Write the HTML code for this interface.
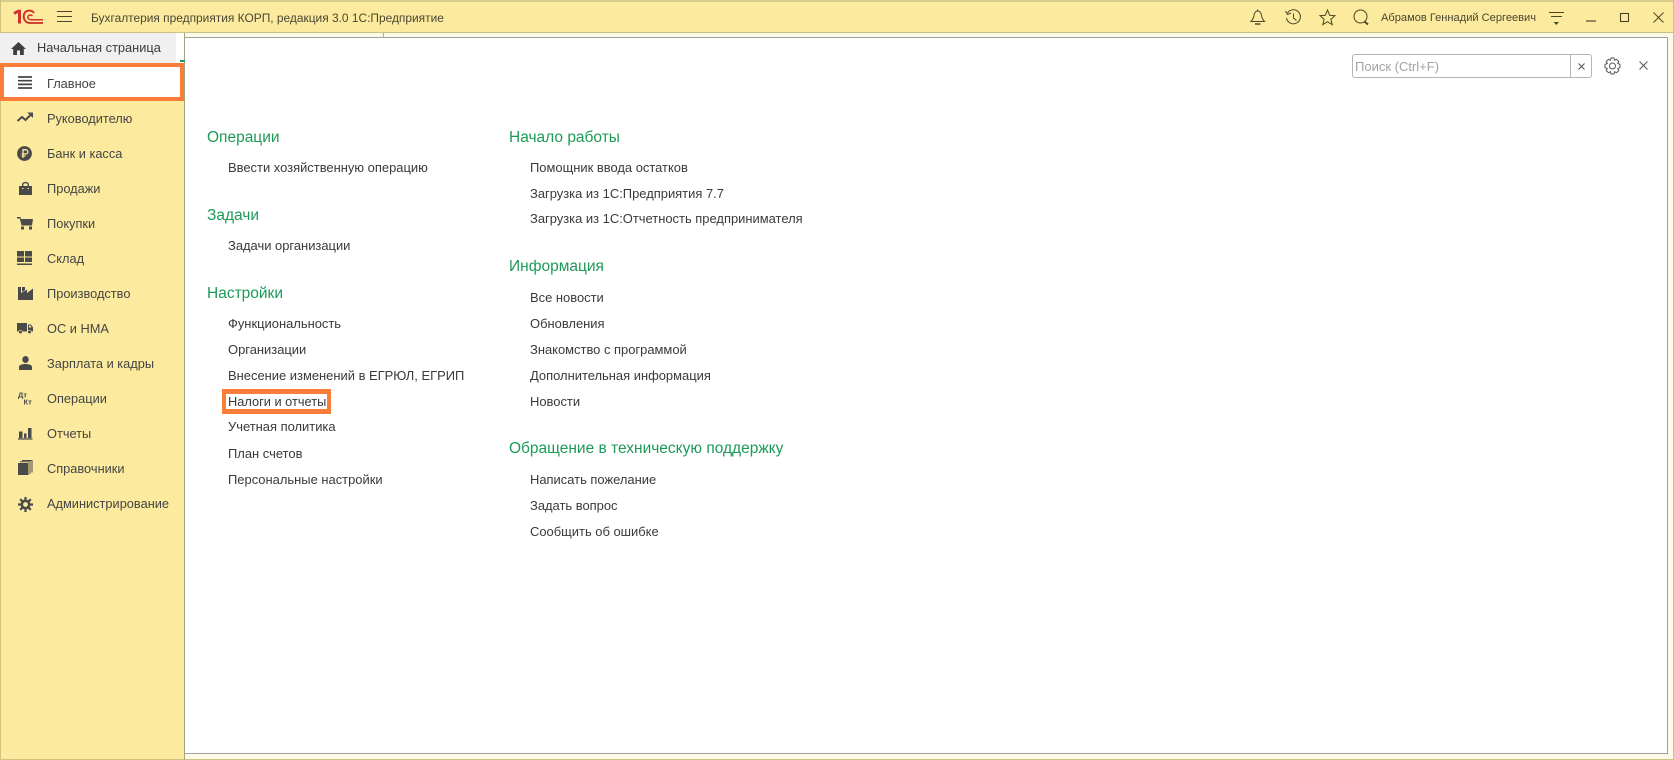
<!DOCTYPE html>
<html lang="ru"><head><meta charset="utf-8"><title>1С</title>
<style>
html,body{margin:0;padding:0;width:1674px;height:760px;overflow:hidden;background:#fdfbe8;font-family:"Liberation Sans",sans-serif;color:#333}
.a{position:absolute;white-space:nowrap}
.t{position:absolute;white-space:nowrap;font-size:12.95px;line-height:20px;height:20px;color:#3a3a3a}
.h{position:absolute;white-space:nowrap;font-size:15.5px;line-height:22px;height:22px;color:#1d9a57}
.s{position:absolute;left:47px;white-space:nowrap;font-size:12.8px;line-height:20px;color:#444}
svg{position:absolute;overflow:visible}
</style></head><body>
<div class="a" style="left:0;top:0;width:1674px;height:2px;background:#d8cd8c"></div>
<div class="a" style="left:0;top:2px;width:1674px;height:30px;background:#fceb9f;border-bottom:1px solid #c9c08a"></div>
<div class="a" style="left:0;top:33px;width:185px;height:727px;background:#fceb9f"></div>
<div class="a" style="left:0;top:0;width:1px;height:760px;background:#cfc47f"></div>
<div class="a" style="left:1673px;top:0;width:1px;height:760px;background:#cfc47f"></div>
<div class="a" style="left:0;top:759px;width:1674px;height:1px;background:#cfc47f"></div>
<div class="a" style="left:184px;top:33px;width:1px;height:727px;background:#a9a37c"></div>

<!-- logo -->
<svg style="left:13px;top:9px" width="31" height="16" viewBox="0 0 31 16" fill="none" stroke="#d2322d">
<path d="M1 4.500L5 2.200H6.500V14.500" stroke-width="3"/>
<path d="M21 4C19 .8 13 .8 11.300 4.500C9.500 9 12 14 17 14" stroke-width="2"/>
<path d="M19.500 7C17.800 5.500 15.500 5.800 15 7.500C14.500 9.500 16 10.700 18 10.700H30" stroke-width="1.500"/>
<path d="M17 14H30" stroke-width="1.800"/>
</svg>
<svg style="left:57px;top:11px" width="15" height="12" fill="none" stroke="#4b4629" stroke-width="1"><path d="M0 .5H15M0 5.500H15M0 10.500H15"/></svg>
<div class="a" style="left:91px;top:8px;font-size:11.93px;line-height:20px;color:#4a4632">Бухгалтерия предприятия КОРП, редакция 3.0 1С:Предприятие</div>

<!-- top right icons -->
<svg style="left:1250px;top:9px" width="16" height="17" fill="none" stroke="#4b4629" stroke-width="1"><path d="M1 12.500H14.500C12.500 10.500 12 9 11.500 6.500C11 3.500 10 2 7.700 2C5.500 2 4.500 3.500 4 6.500C3.500 9 3 10.500 1 12.500Z"/><path d="M5 15H10.500" stroke-width="1.400"/><path d="M7.700 .5V2"/></svg>
<svg style="left:1285px;top:9px" width="17" height="17" fill="none" stroke="#4b4629" stroke-width="1"><path d="M2.500 4A7 7 0 1 1 1.500 9"/><path d="M.5 2L2.500 5.500L6 4"/><path d="M8.500 4.500V9L11.500 11.500"/></svg>
<svg style="left:1319px;top:9px" width="17" height="17" fill="none" stroke="#4b4629" stroke-width="1"><path d="M8.500 1L10.700 6.300L16 6.700L11.900 10.200L13.200 15.700L8.500 12.700L3.800 15.700L5.100 10.200L1 6.700L6.300 6.300Z"/></svg>
<svg style="left:1353px;top:9px" width="17" height="17" fill="none" stroke="#4b4629" stroke-width="1"><circle cx="7.500" cy="7.500" r="6.500"/><path d="M11.500 12.500L15 15.500" stroke-width="2"/></svg>
<div class="a" style="left:1381px;top:8px;font-size:11.1px;line-height:20px;color:#4a4632">Абрамов Геннадий Сергеевич</div>
<svg style="left:1549px;top:11px" width="15" height="14" stroke="#4b4629" stroke-width="1" fill="none"><path d="M0 1.500H15M2 5.500H13"/><path d="M4.500 11H10L7.300 14Z" fill="#4b4629" stroke="none"/></svg>
<svg style="left:1586px;top:20px" width="10" height="2"><path d="M0 1H10" stroke="#4b4629" stroke-width="1.200"/></svg>
<svg style="left:1620px;top:13px" width="9" height="9" fill="none"><rect x=".5" y=".5" width="8" height="8" stroke="#4b4629" stroke-width="1.100"/></svg>
<svg style="left:1653px;top:12px" width="11" height="11" fill="none"><path d="M.5 .5L10.500 10.500M10.500 .5L.5 10.500" stroke="#4b4629" stroke-width="1"/></svg>

<!-- tabs area -->
<div class="a" style="left:0;top:33px;width:176px;height:30px;background:#f0f0f0"></div>
<div class="a" style="left:176px;top:33px;width:8px;height:30px;background:#fff"></div>
<div class="a" style="left:383px;top:33px;width:1px;height:5px;background:#aaa"></div>
<div class="a" style="left:180px;top:60px;width:5px;height:2px;background:#1d9a57"></div>
<svg style="left:11px;top:42px" width="15" height="13"><path d="M7.500 0L15 7H12.800V13H9V8.500H6V13H2.200V7H0Z" fill="#3f3f3f"/></svg>
<div class="a" style="left:37px;top:38px;font-size:12.8px;line-height:20px;color:#3a3a3a">Начальная страница</div>

<!-- content panel -->
<div class="a" style="left:185px;top:37px;width:1483px;height:717px;background:#fff;border-top:1px solid #a0a0a0;border-right:1px solid #a0a0a0;border-bottom:1px solid #a0a0a0;box-sizing:border-box"></div>

<!-- highlighted main -->
<div class="a" style="left:0;top:63px;width:184px;height:38px;background:#fff;border:4px solid #fb7d3a;box-sizing:border-box"></div>
<svg style="left:18px;top:76px" width="14" height="13"><path d="M0 1H14M0 4.700H14M0 8.400H14M0 12H14" stroke="#444" stroke-width="1.700"/></svg>
<div class="s" style="top:74px">Главное</div>

<!-- sidebar items -->
<svg style="left:17px;top:112px" width="16" height="11" fill="none" stroke="#4a4a4a" stroke-width="2"><path d="M.5 9L5 5L8.500 8L14 2.500"/><path d="M10 .5H16V6L13 3Z" fill="#4a4a4a" stroke="none"/></svg>
<div class="s" style="top:109px">Руководителю</div>
<svg style="left:17px;top:146px" width="15" height="15"><circle cx="7.500" cy="7.500" r="7.400" fill="#4a4a4a"/><path d="M6 12V3.700H8.700A2 2 0 0 1 8.700 8H4.700M4.700 10H8.500" fill="none" stroke="#fceb9f" stroke-width="1.300"/></svg>
<div class="s" style="top:144px">Банк и касса</div>
<svg style="left:19px;top:182px" width="13" height="13"><path d="M0 4H13V13H0Z" fill="#4a4a4a"/><path d="M3.700 7V2.800C3.700 -.2 9.300 -.2 9.300 2.800V7" fill="none" stroke="#4a4a4a" stroke-width="1.400"/><path d="M3 6.500H4.400M8.600 6.500H10" stroke="#fceb9f" stroke-width="1"/></svg>
<div class="s" style="top:179px">Продажи</div>
<svg style="left:17px;top:217px" width="16" height="13"><path d="M0 0H3.500L4 2H16L15 8.500H4.500L2.800 1.500H0Z" fill="#4a4a4a"/><rect x="4" y="9.500" width="3" height="3" fill="#4a4a4a"/><rect x="12" y="9.500" width="3" height="3" fill="#4a4a4a"/></svg>
<div class="s" style="top:214px">Покупки</div>
<svg style="left:17px;top:251px" width="15" height="14" fill="#4a4a4a"><rect width="7" height="5.500"/><rect x="8" width="7" height="5.500"/><rect y="6.500" width="7" height="4.500"/><rect x="8" y="6.500" width="7" height="4.500"/><rect y="12.500" width="15" height="1.500"/></svg>
<div class="s" style="top:249px">Склад</div>
<svg style="left:18px;top:287px" width="15" height="13" fill="#4a4a4a"><path d="M0 13V0H3V6L9 2.500V6L15 1.500V13Z"/><path d="M4 0H7V3L4 5Z"/></svg>
<div class="s" style="top:284px">Производство</div>
<svg style="left:17px;top:323px" width="16" height="11" fill="#4a4a4a"><rect width="10" height="8.500"/><path d="M11 1.500H14L16 4.500V8.500H11ZM12 2.500V4.500H14.500L13.500 2.500Z" fill-rule="evenodd"/><circle cx="3.500" cy="9" r="1.800" stroke="#fceb9f" stroke-width=".6"/><circle cx="12.500" cy="9" r="1.800" stroke="#fceb9f" stroke-width=".6"/></svg>
<div class="s" style="top:319px">ОС и НМА</div>
<svg style="left:19px;top:356px" width="13" height="14" fill="#4a4a4a"><ellipse cx="6.500" cy="3.500" rx="3.200" ry="3.500"/><path d="M0 14V11C0 9 3 8 6.500 8S13 9 13 11V14Z"/></svg>
<div class="s" style="top:354px">Зарплата и кадры</div>
<svg style="left:18px;top:391px" width="15" height="15"><text x="0" y="6.500" font-family="Liberation Sans" font-size="7.500" font-weight="bold" fill="#4a4a4a">Дт</text><text x="5.500" y="13.500" font-family="Liberation Sans" font-size="7.500" font-weight="bold" fill="#4a4a4a">Кт</text></svg>
<div class="s" style="top:389px">Операции</div>
<svg style="left:18px;top:428px" width="15" height="12" fill="#4a4a4a"><rect x="1" y="3.500" width="3.500" height="6.500"/><rect x="6" y="5.500" width="2.500" height="4.500"/><rect x="10" y="0" width="3.500" height="10"/><rect y="10.300" width="14.500" height="1.300"/></svg>
<div class="s" style="top:424px">Отчеты</div>
<svg style="left:18px;top:460px" width="15" height="15"><rect y="3" width="10.500" height="12" fill="#4a4a4a"/><path d="M2 1.800H12V14M4 .5H14V12.500" fill="none" stroke="#4a4a4a" stroke-width="1"/></svg>
<div class="s" style="top:459px">Справочники</div>
<svg style="left:18px;top:497px" width="15" height="15" fill="none" stroke="#4a4a4a"><circle cx="7.500" cy="7.500" r="3.700" stroke-width="2.600"/><path d="M7.500 0V3M7.500 12V15M0 7.500H3M12 7.500H15M2.200 2.200L4.300 4.300M10.700 10.700L12.800 12.800M12.800 2.200L10.700 4.300M4.300 10.700L2.200 12.800" stroke-width="2.200"/></svg>
<div class="s" style="top:494px">Администрирование</div>

<!-- search -->
<div class="a" style="left:1352px;top:54px;width:240px;height:24px;box-sizing:border-box;border:1px solid #b5b5b5;border-radius:3px;background:#fff"></div>
<div class="a" style="left:1570px;top:54px;width:1px;height:24px;background:#b5b5b5"></div>
<div class="a" style="left:1355px;top:57px;font-size:13px;line-height:20px;color:#a3a3a3">Поиск (Ctrl+F)</div>
<svg style="left:1578px;top:63px" width="7" height="7" fill="none"><path d="M.5 .5L6.500 6.500M6.500 .5L.5 6.500" stroke="#555" stroke-width="1"/></svg>
<svg style="left:1604px;top:57px" width="17" height="18" viewBox="0 0 17 18" fill="none" stroke="#555" stroke-width="1"><circle cx="8.500" cy="9" r="3"/><path d="M7 1H10L10.500 3.300L12.500 2.300L14.800 4.500L13.700 6.500L16 7.300V10.700L13.700 11.500L14.800 13.500L12.500 15.700L10.500 14.700L10 17H7L6.500 14.700L4.500 15.700L2.200 13.500L3.300 11.500L1 10.700V7.300L3.300 6.500L2.200 4.500L4.500 2.300L6.500 3.300Z"/></svg>
<svg style="left:1639px;top:61px" width="9" height="9" fill="none"><path d="M.5 .5L8.500 8.500M8.500 .5L.5 8.500" stroke="#555" stroke-width="1"/></svg>

<!-- column 1 -->
<div class="h" style="left:207px;top:127px">Операции</div>
<div class="t" style="left:228px;top:158px">Ввести хозяйственную операцию</div>
<div class="h" style="left:207px;top:205px">Задачи</div>
<div class="t" style="left:228px;top:236px">Задачи организации</div>
<div class="h" style="left:207px;top:283px">Настройки</div>
<div class="t" style="left:228px;top:314px">Функциональность</div>
<div class="t" style="left:228px;top:340px">Организации</div>
<div class="t" style="left:228px;top:366px">Внесение изменений в ЕГРЮЛ, ЕГРИП</div>
<div class="a" style="left:222px;top:389px;width:109px;height:25px;box-sizing:border-box;border:solid #fb7d3a;border-width:5px 4px;background:#fff"></div>
<div class="t" style="left:228px;top:392px;font-size:12.8px">Налоги и отчеты</div>
<div class="t" style="left:228px;top:417px">Учетная политика</div>
<div class="t" style="left:228px;top:444px">План счетов</div>
<div class="t" style="left:228px;top:470px">Персональные настройки</div>

<!-- column 2 -->
<div class="h" style="left:509px;top:127px">Начало работы</div>
<div class="t" style="left:530px;top:158px">Помощник ввода остатков</div>
<div class="t" style="left:530px;top:184px">Загрузка из 1С:Предприятия 7.7</div>
<div class="t" style="left:530px;top:209px">Загрузка из 1С:Отчетность предпринимателя</div>
<div class="h" style="left:509px;top:256px">Информация</div>
<div class="t" style="left:530px;top:288px">Все новости</div>
<div class="t" style="left:530px;top:314px">Обновления</div>
<div class="t" style="left:530px;top:340px">Знакомство с программой</div>
<div class="t" style="left:530px;top:366px">Дополнительная информация</div>
<div class="t" style="left:530px;top:392px">Новости</div>
<div class="h" style="left:509px;top:438px">Обращение в техническую поддержку</div>
<div class="t" style="left:530px;top:470px">Написать пожелание</div>
<div class="t" style="left:530px;top:496px">Задать вопрос</div>
<div class="t" style="left:530px;top:522px">Сообщить об ошибке</div>
</body></html>
